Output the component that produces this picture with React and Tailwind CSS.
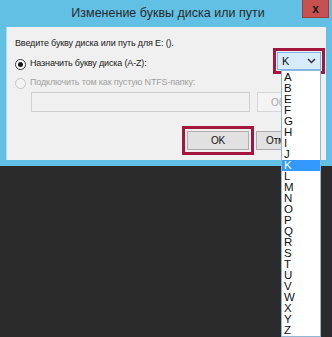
const letters = "ABEFGHIJKLMNOPQRSTUVWXYZ".split("");

export default function App() {
  return (
    <div
      className="relative w-[332px] h-[337px] overflow-hidden bg-[#2b2b2b]"
      style={{ fontFamily: "'Liberation Sans', Arial, sans-serif" }}
    >
      {/* Window frame */}
      <div className="bg-[#62c0e5] pb-[6px]">
        {/* Title bar */}
        <div className="relative h-[27px] flex items-center justify-center">
          <span className="text-[12.5px] text-[#2a2a2a] pl-[4px]">
            Изменение буквы диска или пути
          </span>
          <div className="absolute right-[3px] top-0 w-[27px] h-[18px] bg-[#c75050] border border-[#a33a3a] border-t-0 flex items-center justify-center">
            <span className="text-[12px] font-bold text-[#1a1a1a] leading-none">x</span>
          </div>
        </div>

        {/* Body */}
        <div className="mx-[6px] h-[133px] bg-[#f0f0f0] border-l border-[#a8dcf1] text-[9px] tracking-[-0.15px] text-[#1a1a1a] pt-[9px] pl-[8px]">
          <div className="h-[14px] leading-[14px]">Введите букву диска или путь для E: ().</div>

          <div className="mt-[4px] flex items-center h-[20px]">
            <div className="w-[11px] h-[11px] rounded-full border border-[#333] bg-white flex items-center justify-center">
              <div className="w-[5px] h-[5px] rounded-full bg-[#1a1a1a]" />
            </div>
            <span className="ml-[4px]">Назначить букву диска (A-Z):</span>
            <div className="ml-auto mr-[1px] -mt-[6px] border-[3px] border-[#a4163e] p-[1px]">
              <div className="w-[44px] h-[18px] bg-[#d6ecfa] border border-[#7eb4ea] flex items-center justify-between px-[4px]">
                <span className="text-[11px] text-[#111]">K</span>
                <svg width="9" height="6" viewBox="0 0 9 6">
                  <path d="M1 1 L4.5 4.5 L8 1" fill="none" stroke="#333" strokeWidth="1.5" />
                </svg>
              </div>
            </div>
          </div>

          <div className="mt-[1px] flex items-center h-[16px] text-[#a0a0a0]">
            <div className="w-[11px] h-[11px] rounded-full border border-[#c4c4c4] bg-[#f4f4f4]" />
            <span className="ml-[4px]">Подключить том как пустую NTFS-папку:</span>
          </div>

          <div className="mt-[1px] flex items-center">
            <div className="ml-[16px] w-[219px] h-[20px] bg-[#f0f0f0] border border-[#cfcfcf]" />
            <div className="ml-[7px] w-[64px] h-[20px] bg-[#f4f4f4] border border-[#d5d5d5] flex items-center pl-[13px] text-[10px] text-[#a8a8a8]">
              Обзор...
            </div>
          </div>

          <div className="mt-[14px] flex items-center">
            <div className="ml-[167px] border-[3px] border-[#a4163e] p-[2px]">
              <div className="w-[62px] h-[19px] bg-[#e1e1e1] border border-[#adadad] flex items-center justify-center text-[10px] text-[#111]">
                OK
              </div>
            </div>
            <div className="ml-[2px] w-[64px] h-[19px] bg-[#e1e1e1] border border-[#adadad] flex items-center pl-[9px] text-[10px] text-[#111]">
              Отмена
            </div>
          </div>
        </div>
      </div>

      {/* Dropdown list */}
      <div className="absolute left-[281px] top-[70px] w-[40px] bg-white border border-[#8fb8d4] text-[11.5px] leading-[11px] text-[#111] pt-[1px]">
        {letters.map((l) => (
          <div
            key={l}
            className={`h-[11px] pl-[2px] ${l === "K" ? "bg-[#3399ff] text-white" : ""}`}
          >
            {l}
          </div>
        ))}
      </div>
    </div>
  );
}
